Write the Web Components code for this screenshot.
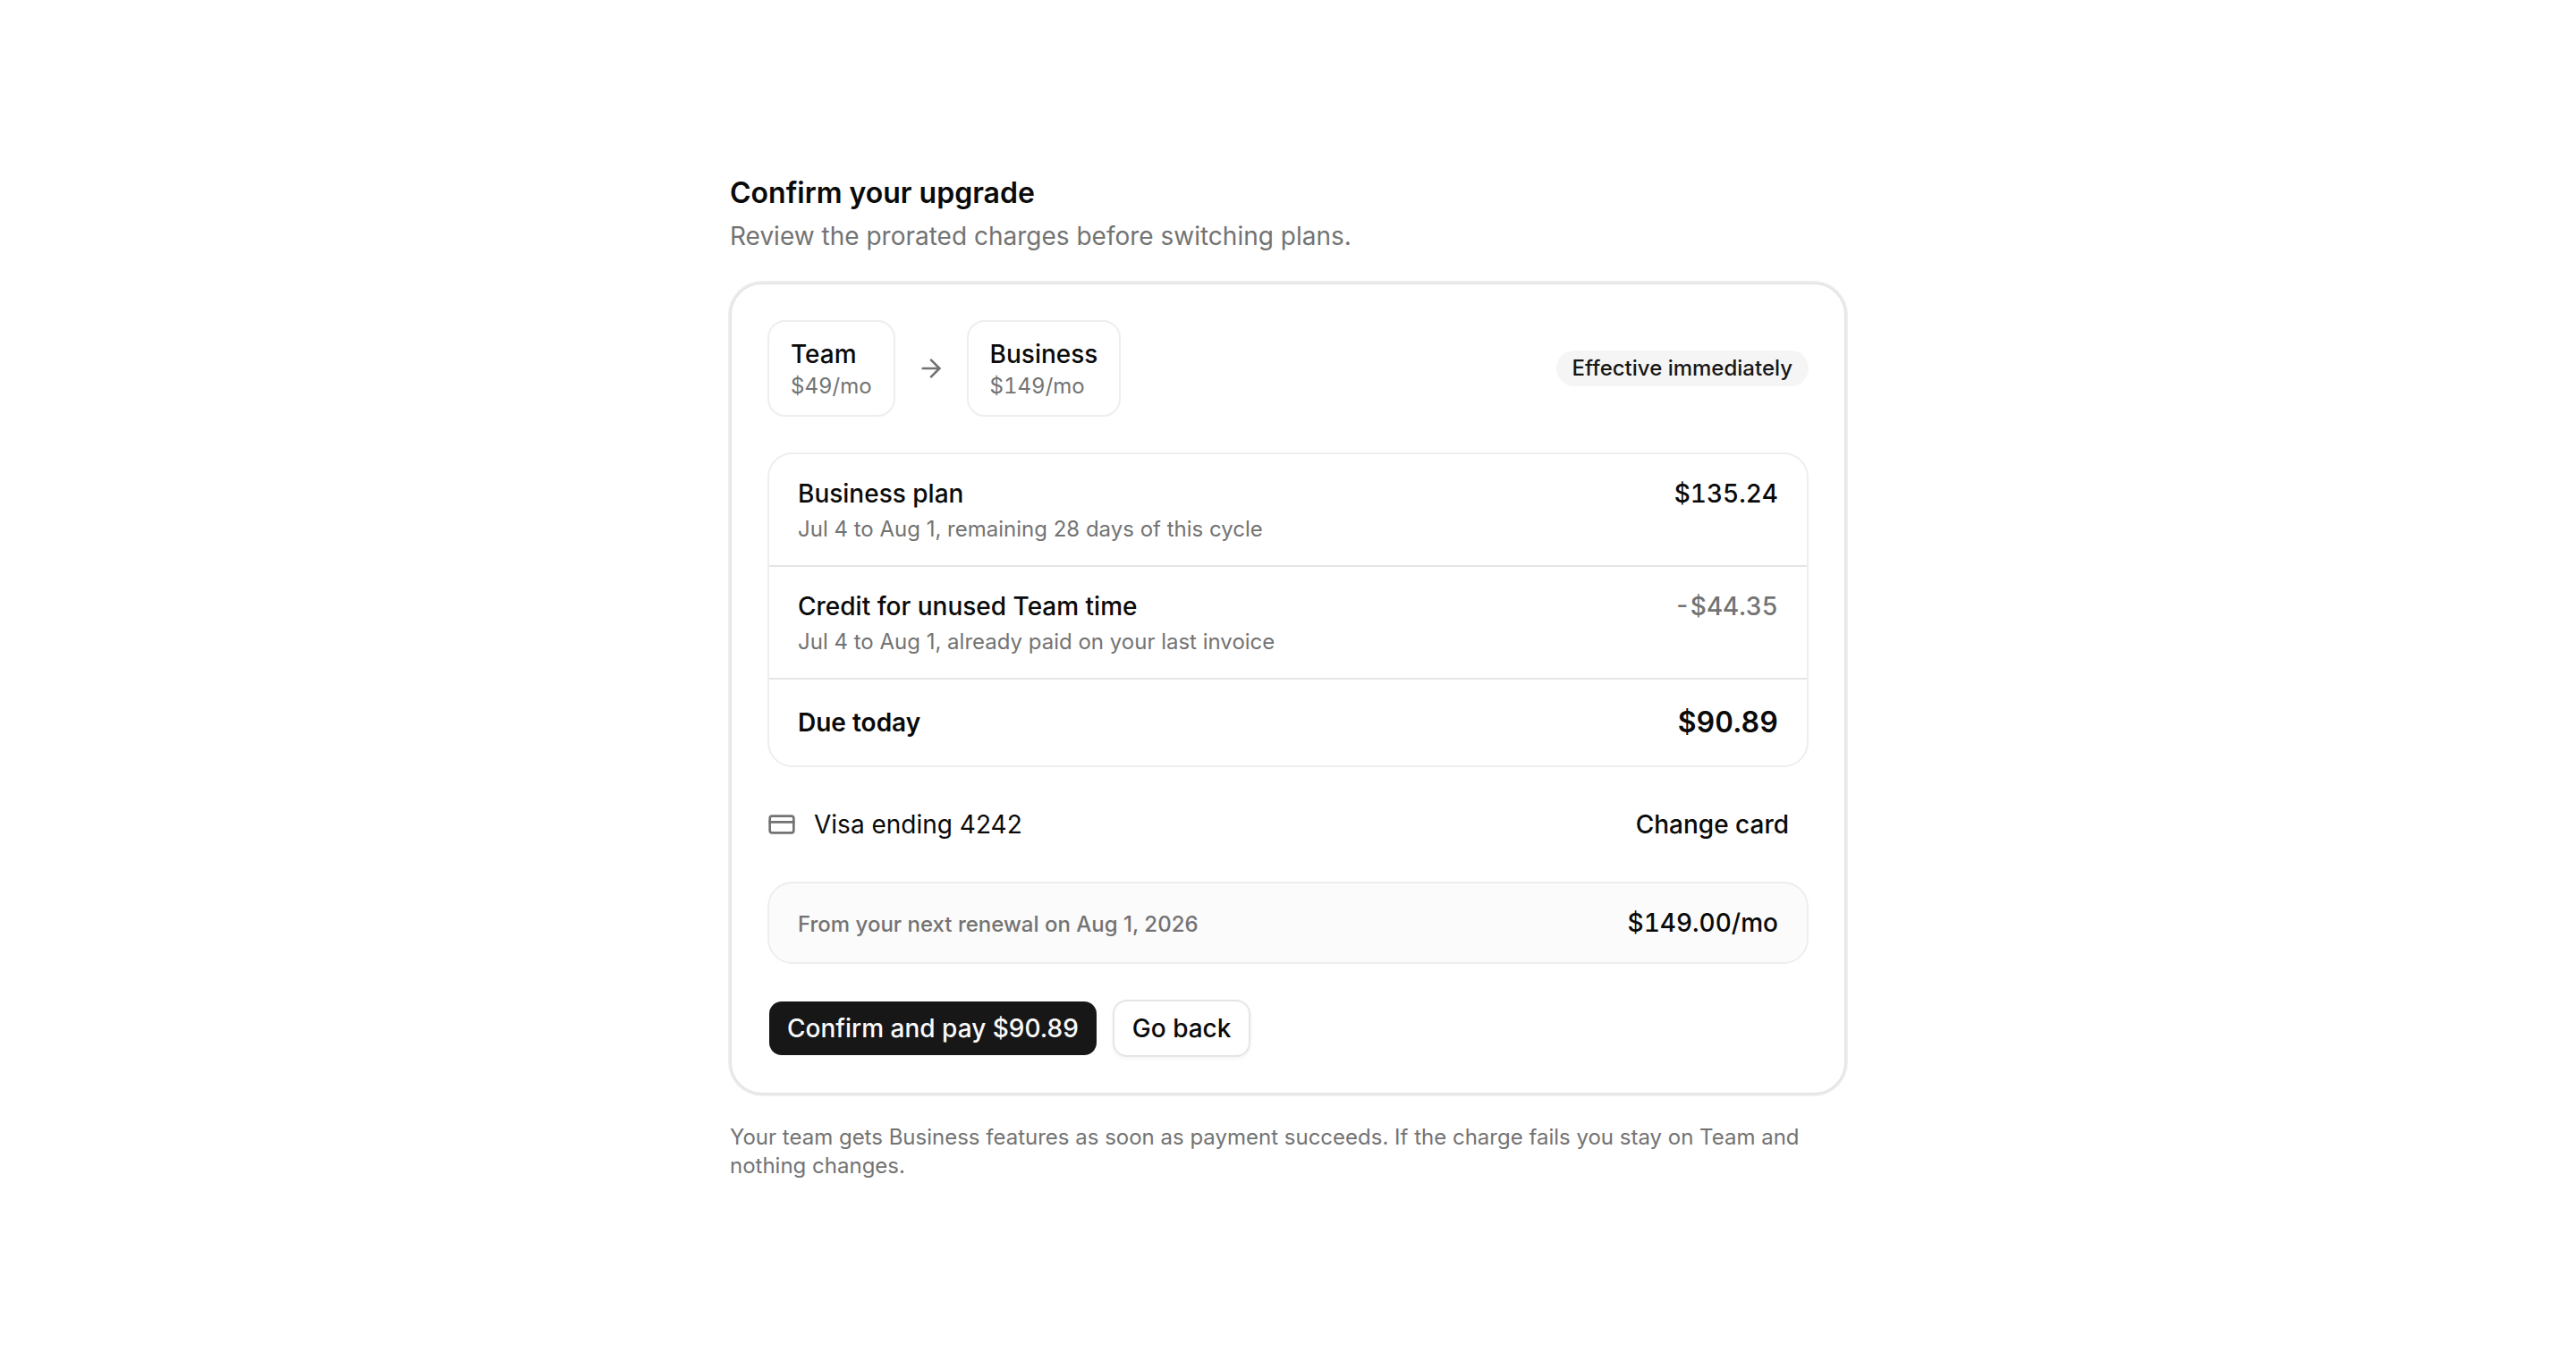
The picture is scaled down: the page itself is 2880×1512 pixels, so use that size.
<!DOCTYPE html>
<html lang="en">
<head>
<meta charset="utf-8">
<meta name="viewport" content="width=device-width, initial-scale=1">
<title>Confirm your upgrade</title>
<style>
  :root {
    --fg: #0a0a0a;
    --muted: #737373;
    --line: #e5e5e5;
    --soft-line: #eeeeee;
    --primary: #171717;
    --text: 28px/40px;
    --small: 24px/32px;
    --large: 32px/48px;
    --family: Inter, "Liberation Sans", sans-serif;
  }
  body { margin: 0; background: #fff; color: var(--fg); font: var(--text) var(--family); }
</style>
</head>
<body>
<upgrade-page>
  <span slot="title">Confirm your upgrade</span>
  <span slot="lead">Review the prorated charges before switching plans.</span>

  <surface-card>
    <plan-switch>
      <plan-chip slot="from" name="Team" price="$49/mo"></plan-chip>
      <plan-chip slot="to" name="Business" price="$149/mo"></plan-chip>
      <status-badge slot="status">Effective immediately</status-badge>
    </plan-switch>
    <charge-list>
      <charge-line label="Business plan" note="Jul 4 to Aug 1, remaining 28 days of this cycle">$135.24</charge-line>
      <charge-line credit label="Credit for unused Team time" note="Jul 4 to Aug 1, already paid on your last invoice">-$44.35</charge-line>
      <charge-line total label="Due today">$90.89</charge-line>
    </charge-list>
    <payment-method>Visa ending 4242<ui-button slot="action" variant="ghost">Change card</ui-button></payment-method>
    <renewal-note amount="$149.00/mo">From your next renewal on Aug 1, 2026</renewal-note>
    <button-row>
      <ui-button variant="primary">Confirm and pay $90.89</ui-button>
      <ui-button variant="outline">Go back</ui-button>
    </button-row>
  </surface-card>

  <span slot="footnote">Your team gets Business features as soon as payment succeeds. If the charge fails you stay on Team and nothing changes.</span>
</upgrade-page>

<script>
const define = (name, render) => customElements.define(name, class extends HTMLElement {
  constructor() {
    super();
    this.attachShadow({ mode: 'open' });
  }
  connectedCallback() {
    this.shadowRoot.innerHTML = '<style>*{box-sizing:border-box}:host{box-sizing:border-box}</style>' + render(this);
  }
});

define('upgrade-page', () => `
  <style>
    :host { display: flex; align-items: center; justify-content: center; min-height: 100vh; padding: 48px; }
    main { display: flex; flex-direction: column; gap: 32px; width: 100%; max-width: 1248px; }
    header { display: flex; flex-direction: column; gap: 4px; }
    h1, p { margin: 0; }
    h1 { font: 600 var(--large) var(--family); }
    header p { color: var(--muted); }
    .foot { font: var(--small) var(--family); color: var(--muted); }
  </style>
  <main>
    <header>
      <h1><slot name="title"></slot></h1>
      <p><slot name="lead"></slot></p>
    </header>
    <slot></slot>
    <p class="foot"><slot name="footnote"></slot></p>
  </main>`);

define('surface-card', () => `
  <style>
    :host { display: flex; flex-direction: column; gap: 40px; padding: 40px; border: 2px solid var(--line);
      border-radius: 36px; background: #fff; box-shadow: 0 0 0 2px var(--soft-line); }
  </style>
  <slot></slot>`);

define('plan-switch', () => `
  <style>
    :host { display: flex; align-items: center; justify-content: space-between; gap: 24px; flex-wrap: wrap; }
    div { display: flex; align-items: center; gap: 24px; }
    svg { width: 32px; height: 32px; color: var(--muted); }
  </style>
  <div>
    <slot name="from"></slot>
    <svg viewBox="0 0 24 24" fill="none" stroke="currentColor" stroke-width="2" stroke-linecap="round" stroke-linejoin="round" aria-hidden="true"><path d="M5 12h14"/><path d="m12 5 7 7-7 7"/></svg>
    <slot name="to"></slot>
  </div>
  <slot name="status"></slot>`);

define('plan-chip', el => `
  <style>
    :host { display: flex; flex-direction: column; padding: 16px 24px; border: 2px solid var(--soft-line); border-radius: 20px; }
    strong { font-weight: 500; }
    span { font: var(--small) var(--family); color: var(--muted); font-variant-numeric: tabular-nums; }
  </style>
  <strong>${el.getAttribute('name')}</strong>
  <span>${el.getAttribute('price')}</span>`);

define('status-badge', () => `
  <style>
    :host { display: flex; align-items: center; height: 40px; padding: 0 18px; border-radius: 20px;
      background: #f5f5f5; color: var(--primary); font: 500 var(--small) var(--family); }
  </style>
  <slot></slot>`);

define('charge-list', () => `
  <style>
    :host { display: flex; flex-direction: column; border: 2px solid var(--soft-line); border-radius: 28px; }
    ::slotted(:not(:first-child)) { border-top: 2px solid var(--line); }
  </style>
  <slot></slot>`);

define('charge-line', el => `
  <style>
    :host { display: flex; justify-content: space-between; gap: 32px; padding: 24px 32px; }
    :host([total]) { align-items: center; }
    .label { display: flex; flex-direction: column; gap: 4px; }
    .name, .amount { font-weight: 500; }
    .note { font: var(--small) var(--family); color: var(--muted); }
    .amount { font-variant-numeric: tabular-nums; }
    :host([credit]) .amount { color: var(--muted); }
    :host([total]) .name { font-weight: 600; }
    :host([total]) .amount { font: 600 var(--large) var(--family); font-variant-numeric: tabular-nums; }
  </style>
  <div class="label">
    <span class="name">${el.getAttribute('label')}</span>
    ${el.hasAttribute('note') ? `<span class="note">${el.getAttribute('note')}</span>` : ''}
  </div>
  <span class="amount"><slot></slot></span>`);

define('payment-method', () => `
  <style>
    :host { display: flex; align-items: center; justify-content: space-between; gap: 24px; }
    div { display: flex; align-items: center; gap: 20px; }
    svg { width: 32px; height: 32px; color: var(--muted); }
  </style>
  <div>
    <svg viewBox="0 0 24 24" fill="none" stroke="currentColor" stroke-width="2" stroke-linecap="round" stroke-linejoin="round" aria-hidden="true"><rect width="20" height="14" x="2" y="5" rx="2"/><path d="M2 10h20"/></svg>
    <span><slot></slot></span>
  </div>
  <slot name="action"></slot>`);

define('renewal-note', el => `
  <style>
    :host { display: flex; align-items: baseline; justify-content: space-between; gap: 32px; padding: 24px 32px;
      border: 2px solid var(--soft-line); border-radius: 28px; background: #fbfbfb; }
    .note { font: 500 var(--small) var(--family); color: var(--muted); }
    .amount { font-weight: 500; font-variant-numeric: tabular-nums; }
  </style>
  <span class="note"><slot></slot></span>
  <span class="amount">${el.getAttribute('amount')}</span>`);

define('button-row', () => `
  <style>:host { display: flex; flex-wrap: wrap; gap: 16px; }</style>
  <slot></slot>`);

define('ui-button', () => `
  <style>
    :host { display: flex; }
    button { height: 64px; margin: 0; padding: 0 20px; border: 2px solid transparent; border-radius: 16px;
      background: transparent; background-clip: padding-box; color: inherit; font: 500 var(--text) var(--family); cursor: pointer; }
    :host([variant="primary"]) button { background-color: var(--primary); color: #fafafa; }
    :host([variant="outline"]) button { border-color: var(--line); background-color: #fff; box-shadow: 0 2px 4px rgba(0, 0, 0, .05); }
    :host([variant="ghost"]) button { height: 48px; }
  </style>
  <button type="button"><slot></slot></button>`);
</script>
</body>
</html>
